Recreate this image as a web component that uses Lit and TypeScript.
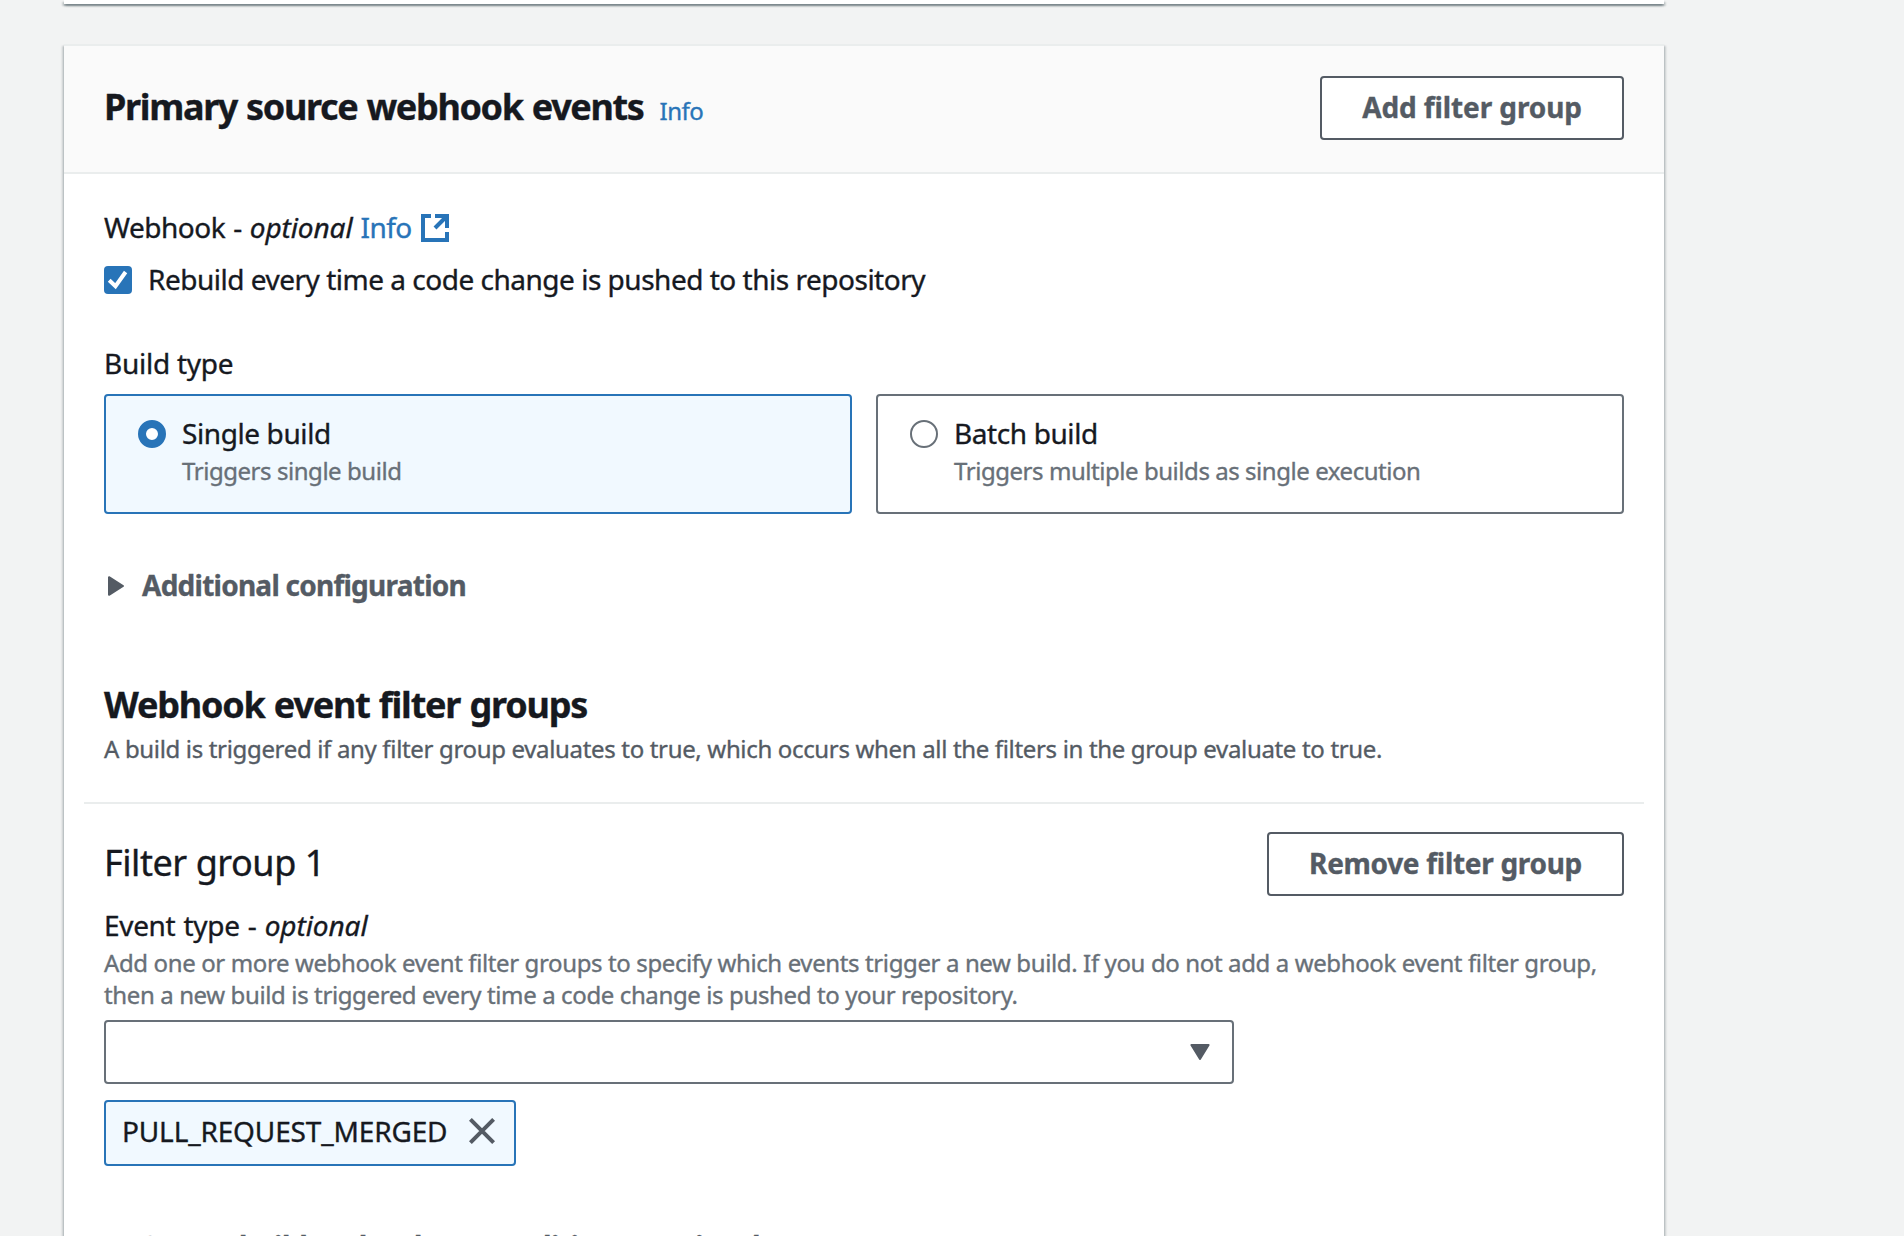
import { LitElement, html, svg, css } from "lit";
import { customElement, property, state } from "lit/decorators.js";

const caretRight = html`<svg class="caret" width="16" height="20" viewBox="0 0 16 20">${svg`<path d="M1 1.2v17.6L15 10z" fill="#545b64" stroke="#545b64" stroke-width="2" stroke-linejoin="round"/>`}</svg>`;

@customElement("build-tile")
export class BuildTile extends LitElement {
  @property() label = "";
  @property() description = "";
  @property({ type: Boolean, reflect: true }) selected = false;

  static styles = css`
    :host {
      box-sizing: border-box;
      display: flex;
      gap: 16px;
      height: 120px;
      padding: 15px 32px 0;
      border: 2px solid #687078;
      border-radius: 4px;
      background: #fff;
      cursor: pointer;
    }
    :host([selected]) {
      border-color: #2874b8;
      background: #f1f9ff;
    }
    .radio {
      box-sizing: border-box;
      flex: none;
      width: 28px;
      height: 28px;
      margin-top: 9px;
      border: 2px solid #687078;
      border-radius: 50%;
      background: #fff;
    }
    :host([selected]) .radio {
      border: 8px solid #2874b8;
    }
    .label { font-size: 28px; line-height: 44px; letter-spacing: -0.4px; color: #16191f; }
    .description { font-size: 24px; line-height: 32px; letter-spacing: -0.45px; color: #687078; }
  `;

  render() {
    return html`
      <div class="radio"></div>
      <div>
        <div class="label">${this.label}</div>
        <div class="description">${this.description}</div>
      </div>
    `;
  }
}

@customElement("app-root")
export class AppRoot extends LitElement {
  @state() private buildType = "single";

  static styles = css`
    :host {
      display: flex;
      flex-direction: column;
      gap: 40px;
      height: 1236px;
      overflow: hidden;
      background: #f2f3f3;
      font-family: "Noto Sans", "Open Sans", sans-serif;
      font-size: 28px;
      line-height: 44px;
      letter-spacing: -0.49px;
      color: #16191f;
      white-space: nowrap;
      -webkit-text-stroke-width: 0.35px;
    }
    .card {
      box-sizing: border-box;
      flex: none;
      width: 1600px;
      margin-left: 64px;
      background: #fff;
      box-shadow: 0 2px 2px 0 rgba(0, 28, 36, 0.3), 2px 2px 2px 0 rgba(0, 28, 36, 0.15),
        -2px 2px 2px 0 rgba(0, 28, 36, 0.15);
    }
    .previous { height: 4px; }
    .main { height: 1300px; border-top: 2px solid #eaeded; }
    .header {
      box-sizing: border-box;
      display: flex;
      align-items: center;
      justify-content: space-between;
      height: 128px;
      padding: 0 40px 2px;
      border-bottom: 2px solid #eaeded;
      background: #fafafa;
    }
    .title { display: flex; align-items: baseline; gap: 16px; padding-top: 2px; }
    h2, h3, h4, p { margin: 0; }
    h2 { font-size: 36px; line-height: 44px; font-weight: 700; letter-spacing: -1.35px; word-spacing: 1px; }
    a { color: #2874b8; text-decoration: none; }
    .small { font-size: 24px; letter-spacing: -0.5px; }
    .optional { word-spacing: 1.2px; }
    .optional i { letter-spacing: -0.1px; }
    .optional a { letter-spacing: -0.6px; }
    button {
      box-sizing: border-box;
      height: 64px;
      padding: 0 40px 2px;
      border: 2px solid #545b64;
      border-radius: 4px;
      background: #fff;
      color: #545b64;
      font: 700 28px/58px "Noto Sans", "Open Sans", sans-serif;
    }
    .add { width: 304px; letter-spacing: -0.1px; }
    .remove { width: 357px; letter-spacing: -0.3px; }
    .body { padding: 31px 40px 0; }
    .row { display: flex; align-items: center; }
    .external { margin: 2px 0 0 9px; }
    .check { margin-top: 8px; gap: 16px; }
    .box { display: block; margin-top: 2px; }
    .build { margin-top: 40px; letter-spacing: -0.25px; }
    .tiles { display: grid; grid-template-columns: 1fr 1fr; gap: 24px; margin-top: 9px; }
    .expander { gap: 18px; padding-left: 4px; font-weight: 700; color: #545b64; letter-spacing: -0.42px; }
    .caret { margin-top: 2px; }
    .additional { margin-top: 49px; letter-spacing: -0.75px; }
    .conditions { margin-top: 58px; }
    .groups { margin-top: 76px; letter-spacing: -1.2px; }
    .hint { margin-top: 6px; font-size: 24px; line-height: 32px; letter-spacing: -0.335px; color: #545b64; }
    .divider { height: 2px; margin: 37px -20px 28px; background: #eaeded; }
    .group { justify-content: space-between; }
    h4 { padding-bottom: 2px; font-size: 36px; font-weight: 400; letter-spacing: -0.45px; }
    .event { margin-top: 7px; letter-spacing: -0.32px; }
    .constraint { font-size: 24px; line-height: 32px; letter-spacing: -0.38px; color: #687078; }
    .select {
      box-sizing: border-box;
      display: flex;
      align-items: center;
      justify-content: flex-end;
      width: 1130px;
      height: 64px;
      margin-top: 9px;
      padding-right: 22px;
      border: 2px solid #687078;
      border-radius: 4px;
    }
    .token {
      box-sizing: border-box;
      display: flex;
      align-items: center;
      justify-content: space-between;
      width: 412px;
      height: 66px;
      margin-top: 16px;
      padding: 0 19px 4px 16px;
      border: 2px solid #2874b8;
      border-radius: 4px;
      background: #f1f9ff;
      letter-spacing: -0.15px;
    }
  `;

  render() {
    return html`
      <section class="card previous"></section>
      <section class="card main">
        <header class="header">
          <div class="title">
            <h2>Primary source webhook events</h2>
            <a class="small">Info</a>
          </div>
          <button class="add">Add filter group</button>
        </header>
        <div class="body">
          <div class="row">
            <span class="optional">Webhook - <i>optional</i> <a>Info</a></span>
            <svg class="external" width="28" height="28" viewBox="0 0 28 28" fill="none" stroke="#2874b8" stroke-width="4">
              <path d="M10 2H2v24h24v-8" />
              <path d="M14 2h12v12" />
              <path d="M25 3L14 14" />
            </svg>
          </div>
          <div class="row check">
            <svg class="box" width="28" height="28" viewBox="0 0 28 28">
              <rect width="28" height="28" rx="4" fill="#2874b8" />
              <path d="M5.2 14.2l6.3 6L21.6 6" fill="none" stroke="#fff" stroke-width="4" />
            </svg>
            <span>Rebuild every time a code change is pushed to this repository</span>
          </div>
          <div class="build">Build type</div>
          <div class="tiles">
            <build-tile
              label="Single build"
              description="Triggers single build"
              ?selected=${this.buildType === "single"}
              @click=${() => (this.buildType = "single")}
            ></build-tile>
            <build-tile
              label="Batch build"
              description="Triggers multiple builds as single execution"
              ?selected=${this.buildType === "batch"}
              @click=${() => (this.buildType = "batch")}
            ></build-tile>
          </div>
          <div class="row expander additional">${caretRight}<span>Additional configuration</span></div>
          <h2 class="groups">Webhook event filter groups</h2>
          <p class="hint">A build is triggered if any filter group evaluates to true, which occurs when all the filters in the group evaluate to true.</p>
          <div class="divider"></div>
          <div class="row group">
            <h4>Filter group 1</h4>
            <button class="remove">Remove filter group</button>
          </div>
          <div class="event optional">Event type - <i>optional</i></div>
          <p class="constraint">Add one or more webhook event filter groups to specify which events trigger a new build. If you do not add a webhook event filter group,<br />then a new build is triggered every time a code change is pushed to your repository.</p>
          <div class="select">
            <svg width="20" height="16" viewBox="0 0 20 16">
              <path d="M1.4 1h17.2L10 15z" fill="#545b64" stroke="#545b64" stroke-width="2" stroke-linejoin="round" />
            </svg>
          </div>
          <div class="token">
            <span>PULL_REQUEST_MERGED</span>
            <svg width="26" height="26" viewBox="0 0 26 26" stroke="#545b64" stroke-width="4">
              <path d="M1.4 1.4l23.2 23.2M24.6 1.4L1.4 24.6" />
            </svg>
          </div>
          <div class="row expander conditions">${caretRight}<span>Start a build under these conditions - <i>optional</i></span></div>
        </div>
      </section>
    `;
  }
}
